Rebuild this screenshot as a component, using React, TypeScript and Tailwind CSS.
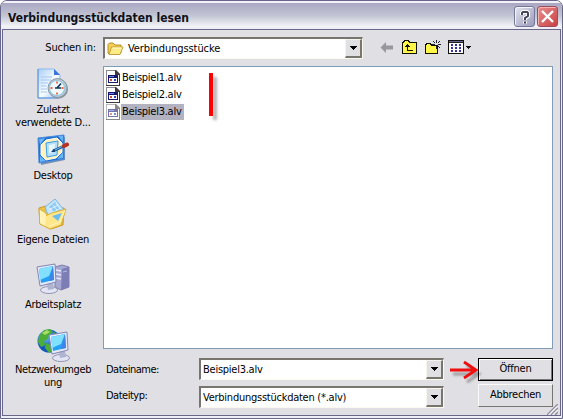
import type { ReactNode } from 'react';
import clsx from 'clsx';

const files = ['Beispiel1.alv', 'Beispiel2.alv', 'Beispiel3.alv'];

function RecentIcon() {
  return (
    <svg width="32" height="32" viewBox="0 0 32 32">
      <defs>
        <linearGradient id="paper" x2="1" y2="1">
          <stop stopColor="#a9cdf8" />
          <stop offset=".55" stopColor="#fafdff" />
          <stop offset="1" stopColor="#8eb9ee" />
        </linearGradient>
      </defs>
      <path d="M1 1h16l6 6v23H1z" fill="url(#paper)" stroke="#8fb8ee" />
      <path d="M1 1v29h20" fill="none" stroke="#5b93dd" />
      <path d="M17 1v6h6z" fill="#3978d8" />
      <path d="M4 9h11M4 12h10M4 15h7M4 18h6M4 21h6M4 24h6" stroke="#a4c8f2" />
      <circle cx="21.500" cy="21" r="9.500" fill="#85919c" />
      <circle cx="20.500" cy="20" r="9.500" fill="#b9c7d1" stroke="#8799a6" />
      <circle cx="20" cy="20" r="7.5" fill="#eefaff" stroke="#8fc6e2" />
      <path d="M20 13.500v2M20 24.500v2M13.500 20h2M24.500 20h2" stroke="#ed6242" strokeWidth="1.8" />
      <path d="M24 15.500l-4 4.500M18 20h6" fill="none" stroke="#17334c" strokeWidth="1.6" />
    </svg>
  );
}

function DesktopIcon() {
  return (
    <svg width="32" height="32" viewBox="0 0 32 32">
      <path d="M3 6L28 3v23L4 31z" fill="#7c8fae" />
      <path d="M1 4l26-3v24L2 29z" fill="#1c6fd2" stroke="#4c8cdf" />
      <path d="M2 5l6-1-5 7zM21 2l5 0 0 6zM3 22l6 5-6 1zM26 18v6l-6 1z" fill="#69b4f5" />
      <path d="M9 6l11-2 5 5v9l-6 6-10 2-5-5V11z" fill="#fff0bd" stroke="#fffce9" />
      <path d="M9 9l12-2-1 14-10 2z" fill="#b5e0ff" stroke="#3b9be5" />
      <path d="M12 11l6-1-1 8-5 1z" fill="#e8f8ff" />
      <path d="M16 17l11-5" stroke="#215c9c" strokeWidth="3" />
      <path d="M18 16l8-4" stroke="#72bcf1" />
      <path d="M14 18l3-3 1 3z" fill="#163d68" />
      <path d="M27 12l3-1.500" stroke="#b93120" strokeWidth="4" strokeLinecap="round" />
    </svg>
  );
}

function DocumentsIcon() {
  return (
    <svg width="32" height="32" viewBox="0 0 32 32">
      <path d="M2 10l7-2 3 3 15-1-1 17-12 4-11-5z" fill="#edc248" stroke="#c99a26" />
      <path d="M8 9L18 1l9 11-6 10-9-2z" fill="#c4e5fb" stroke="#75b8e6" />
      <path d="M12 9l6-5 7 9-7 4z" fill="#8fcaf5" />
      <path d="M13 10l3 4M16 7l4 5M19 5l4 6M12 12l9-5M15 15l9-5" stroke="#e7f6ff" strokeWidth=".8" />
      <path d="M2 11l6 3v4l7-3 14-4-5 16-11 4-10-5z" fill="#ffe68a" stroke="#dcae34" />
      <path d="M3 12l6 4-1 12-5-3z" fill="#fff3b5" />
      <path d="M15 18l10-3-4 8z" fill="#6bbcf0" />
      <path d="M12 28l11-4 5-12" fill="none" stroke="#fff5bd" />
    </svg>
  );
}

function Monitor({ x = 0, y = 0 }: { x?: number; y?: number }) {
  return (
    <g transform={`translate(${x} ${y})`}>
      <ellipse cx="13" cy="26" rx="8.500" ry="3.500" fill="#e3e5f4" stroke="#9495b5" />
      <path d="M11 20l6-1 1 6-6 1z" fill="#aeb4cf" />
      <path d="M1 3l18-3 1 18-16 4z" fill="#e6eafa" stroke="#8186b9" />
      <path d="M3 5l14-3 1 14-13 3z" fill="#279ff2" />
      <path d="M3 5l14-3-4 10-9 4z" fill="#82e0ff" />
      <path d="M17 2l1 14-5 1z" fill="#4283e8" />
    </g>
  );
}

function ComputerIcon() {
  return (
    <svg width="34" height="32" viewBox="0 0 34 32">
      <path d="M19 4l7-2 7 2v20l-8 3-6-3z" fill="#a6a8d2" stroke="#7e80b0" />
      <path d="M26 6l7-2v20l-8 3z" fill="#7c7db5" />
      <path d="M20 7l5 1M20 11l5 1M20 15l5 1" stroke="#e6e8fc" strokeWidth="1.5" />
      <path d="M27 9l4-1" stroke="#bbbde7" />
      <Monitor y={1} />
    </svg>
  );
}

function NetworkIcon() {
  return (
    <svg width="34" height="34" viewBox="0 0 34 34">
      <defs>
        <radialGradient id="globe" cx=".35" cy=".3">
          <stop stopColor="#72c7f8" />
          <stop offset="1" stopColor="#1256b9" />
        </radialGradient>
      </defs>
      <circle cx="13" cy="13" r="11.5" fill="url(#globe)" />
      <path d="M3 8l5-6 6-1 3 3-4 3-1 4-4 2 1 4-4 2-3-5zM10 15l6 2 1 5-4 3-4-5zM18 4l4 4-3 3-3-3z" fill="#4cae39" />
      <path d="M6 5l5-3 3 2-5 3z" fill="#a9dd68" />
      <Monitor x={12} y={4} />
    </svg>
  );
}

function FileIcon({ faded }: { faded?: boolean }) {
  return (
    <svg className={clsx('shrink-0', faded && 'opacity-60')} width="16" height="16" viewBox="0 0 16 16" shapeRendering="crispEdges">
      <path d="M1 0h10l4 4v12H1z" fill="#8a8a90" />
      <path d="M2 1h8v4h4v10H2z" fill="#fff" />
      <path d="M10 0h1v1h1v1h1v1h1v1h1v12H1v-1h13V5h-4z" fill="#3c3c40" />
      <path d="M3 5h10v8H3z" fill="#18186c" />
      <path d="M4 8h8v4H4z" fill="#fff" />
      <path d="M4 6h5v1H4z" fill="#5e81dc" />
      <path d="M5 9h2v2H5z" fill="#d24b3b" />
      <path d="M9 9h2v2H9z" fill="#2a3fb7" />
    </svg>
  );
}

function FolderIcon() {
  return (
    <svg className="shrink-0" width="17" height="16" viewBox="0 0 17 16">
      <path d="M1 3.5L2.5 2H6l2 2h6v8l-2 1.5H2.5L1 12z" fill="#f4cf52" stroke="#b7912c" />
      <path d="M4.5 6H16l-3 7.5H2z" fill="#ffeb87" stroke="#c8a136" />
      <path d="M5.5 7h9" stroke="#fffbd3" />
    </svg>
  );
}

function Toolbar() {
  return (
    <div className="ml-[17px] flex items-start pt-[3px]">
      <svg className="mt-[2px] mr-[7px]" width="15" height="11" viewBox="0 0 15 11">
        <path d="M.5 5.500L6 0v3.500h7v4H6V11z" fill="#99979d" />
      </svg>
      <svg className="mr-[8px]" width="15" height="14" viewBox="0 0 15 14" shapeRendering="crispEdges">
        <path d="M.5 13.500V2.500h1v-1h1v-1h4v1h1v1h7v11z" fill="#fff647" stroke="#111100" />
        <path d="M5 4h1v1h1v1h1v1H6v3h5v1H5V7H3V6h1V5h1z" fill="#111" />
      </svg>
      <svg className="mr-[6px]" width="17" height="14" viewBox="0 0 17 14" shapeRendering="crispEdges">
        <path d="M.5 13.500V4.500h1v-1h4v1h1v1h6v8z" fill="#fff647" stroke="#111100" />
        <path d="M11 0h1v3h-1zM11 6h1v3h-1zM7 4h3v1H7zM13 4h3v1h-3zM8 1h1v1H8zM9 2h1v1H9zM14 1h1v1h-1zM13 2h1v1h-1zM13 6h1v1h-1zM14 7h1v1h-1z" fill="#222232" />
      </svg>
      <svg width="24" height="14" viewBox="0 0 24 14" shapeRendering="crispEdges">
        <path d="M.5.500h15v13H.5z" fill="#fff" stroke="#111" />
        <path d="M1 1h14v1H1z" fill="#65658c" />
        <path d="M1 2h14v1H1z" fill="#222" />
        <path d="M3 4h2v2H3zM7 4h2v2H7zM11 4h2v2h-2zM3 7h2v2H3zM7 7h2v2H7zM11 7h2v2h-2zM3 10h2v2H3zM7 10h2v2H7zM11 10h2v2h-2z" fill="#34349c" />
        <path d="M18 6h5v1h-1v1h-1v1h-1V8h-1V7h-1z" fill="#111" />
      </svg>
    </div>
  );
}

function ComboBox({ children, className }: { children: ReactNode; className?: string }) {
  return (
    <div className={clsx('flex h-[22px] shrink-0 border border-t-2 border-l-2 border-[#fbf9ee] border-t-[#77756e] border-l-[#77756e] bg-white', className)}>
      <div className="flex min-w-0 flex-1 items-center gap-[4px] pt-px pl-[2px]">{children}</div>
      <div className="flex w-[17px] items-center justify-center border border-r-2 border-b-2 border-[#f6f4ec] border-r-[#77756e] border-b-[#77756e] bg-[#e0dfe3]">
        <svg width="7" height="4" viewBox="0 0 7 4" shapeRendering="crispEdges">
          <path d="M0 0h7v1H6v1H5v1H4v1H3V3H2V2H1V1H0z" fill="#000" />
        </svg>
      </div>
    </div>
  );
}

function Place({ icon, className, children }: { icon: ReactNode; className: string; children: ReactNode }) {
  return (
    <div className={clsx('flex flex-col items-center text-center leading-[13px]', className)}>
      <div className="flex h-[35px] shrink-0 items-start">{icon}</div>
      {children}
    </div>
  );
}

export default function App() {
  return (
    <div className="flex h-[419px] w-[563px] flex-col overflow-hidden rounded-t-[7px] border border-[#68668b] bg-[#e0dfe3] font-['DejaVu_Sans_Condensed','DejaVu_Sans',sans-serif] text-[11px] font-stretch-condensed tracking-[-0.25px] text-black">
      {/* Title bar */}
      <div className="flex h-[28px] shrink-0 items-center border-t-2 border-[#f3f2f8] bg-linear-to-b from-[#a9a7c2] via-[#c3c6d4] to-white pr-[4px] pl-[7px]">
        <h1 className="flex-1 pt-[3px] font-['DejaVu_Sans_Condensed','DejaVu_Sans',sans-serif] text-[12px] font-bold tracking-[0px] whitespace-nowrap text-[#101018]">
          Verbindungsstückdaten lesen
        </h1>
        <div className="flex gap-[2px] pt-[1px]">
          <button className="flex size-[21px] items-center justify-center rounded-[3px] border border-[#777799] bg-linear-to-br from-[#e4e4f0] to-[#9a9bbb] shadow-[inset_1px_1px_#f4f4fa]">
            <svg width="12" height="14" viewBox="0 0 12 14">
              <path d="M3 5V3l1-1h4l1 1v3L6 8v2M6 11.500v2" fill="none" stroke="#fff" strokeWidth="4" />
              <path d="M3 5V3l1-1h4l1 1v3L6 8v2M6 11.500v2" fill="none" stroke="#44445c" strokeWidth="2" />
            </svg>
          </button>
          <button className="flex size-[21px] items-center justify-center rounded-[3px] border border-[#a04a5c] bg-linear-to-br from-[#e88c8e] to-[#c83f44] shadow-[inset_1px_1px_#f3b4b6]">
            <svg width="13" height="13" viewBox="0 0 13 13">
              <path d="M1 1l11 11M12 1L1 12" stroke="#fff" strokeWidth="2.4" />
            </svg>
          </button>
        </div>
      </div>

      {/* Dialog body */}
      <div className="mx-[1px] mb-[2px] flex min-h-0 flex-1 border border-[#68668b] pt-[7px] outline-2 outline-[#eeeef5]">
        <aside className="w-[100px] shrink-0">
          <div className="h-[22px] pt-[3px] pr-[7px] text-right tracking-[-0.15px]">Suchen in:</div>
          <Place icon={<RecentIcon />} className="mt-[9px] h-[66px]">
            Zuletzt<br />verwendete D...
          </Place>
          <Place icon={<DesktopIcon />} className="h-[64px]">Desktop</Place>
          <Place icon={<DocumentsIcon />} className="h-[65px]">Eigene Dateien</Place>
          <Place icon={<ComputerIcon />} className="h-[65px]">Arbeitsplatz</Place>
          <Place icon={<NetworkIcon />} className="h-[62px]">
            <span className="tracking-[-0.35px]">Netzwerkumgeb<br />ung</span>
          </Place>
        </aside>

        <main className="flex flex-1 flex-col">
          <div className="flex">
            <ComboBox className="w-[260px]">
              <FolderIcon />
              <span className="tracking-[-0.1px]">Verbindungsstücke</span>
            </ComboBox>
            <Toolbar />
          </div>

          <div className="mt-[7px] flex h-[283px] w-[450px] shrink-0 border border-[#7f9db9] bg-white pt-[2px] pl-[1px]">
            <ul className="w-[104px]">
              {files.map((file, i) => (
                <li key={file} className="flex h-[17px] items-center">
                  <FileIcon faded={i === 2} />
                  <span className={clsx('h-[16px] pr-[2px] pl-px leading-[16px]', i === 2 && 'bg-[#b3b2c1]')}>{file}</span>
                </li>
              ))}
            </ul>
            <div className="mt-[4px] h-[43px] w-[4px] bg-[#f00] shadow-[4px_4px_3px_rgba(0,0,0,0.3)]" />
          </div>

          <div className="mt-[9px] flex min-h-0 flex-1 items-start">
            <div className="w-[96px] pl-[3px] tracking-[-0.5px]">
              <div className="h-[27px] pt-[4px]">Dateiname:</div>
              <div className="pt-[3px]">Dateityp:</div>
            </div>
            <div className="flex flex-col gap-[6px]">
              <ComboBox className="w-[245px]">Beispiel3.alv</ComboBox>
              <ComboBox className="w-[245px]">Verbindungsstückdaten (*.alv)</ComboBox>
            </div>
            <svg className="mt-[2px] ml-[6px] shrink-0 overflow-visible drop-shadow-[3px_4px_1px_rgba(0,0,0,0.3)]" width="28" height="20" viewBox="0 0 28 20">
              <path d="M0 10h26M14 2l12 8-12 8" fill="none" stroke="#f00f0f" strokeWidth="2.8" />
            </svg>
            <div className="flex flex-col gap-[3px]">
              <button className="h-[23px] w-[75px] border border-black bg-[#e0dfe3] shadow-[inset_1px_1px_#fff,inset_-1px_-1px_#777]">Öffnen</button>
              <button className="h-[23px] w-[75px] border border-[#fafafa] border-r-[#77756e] border-b-[#77756e] bg-[#e0dfe3]">Abbrechen</button>
            </div>
            <svg className="-ml-[6px] shrink-0 self-end" width="11" height="11" viewBox="0 0 11 11">
              <path d="M0 11L11 0M4 11l7-7M8 11l3-3" stroke="#8f8d9b" strokeWidth="1.5" />
              <path d="M1.500 11L11 1.500M5.500 11L11 5.500" stroke="#fff" />
            </svg>
          </div>
        </main>
      </div>
    </div>
  );
}
